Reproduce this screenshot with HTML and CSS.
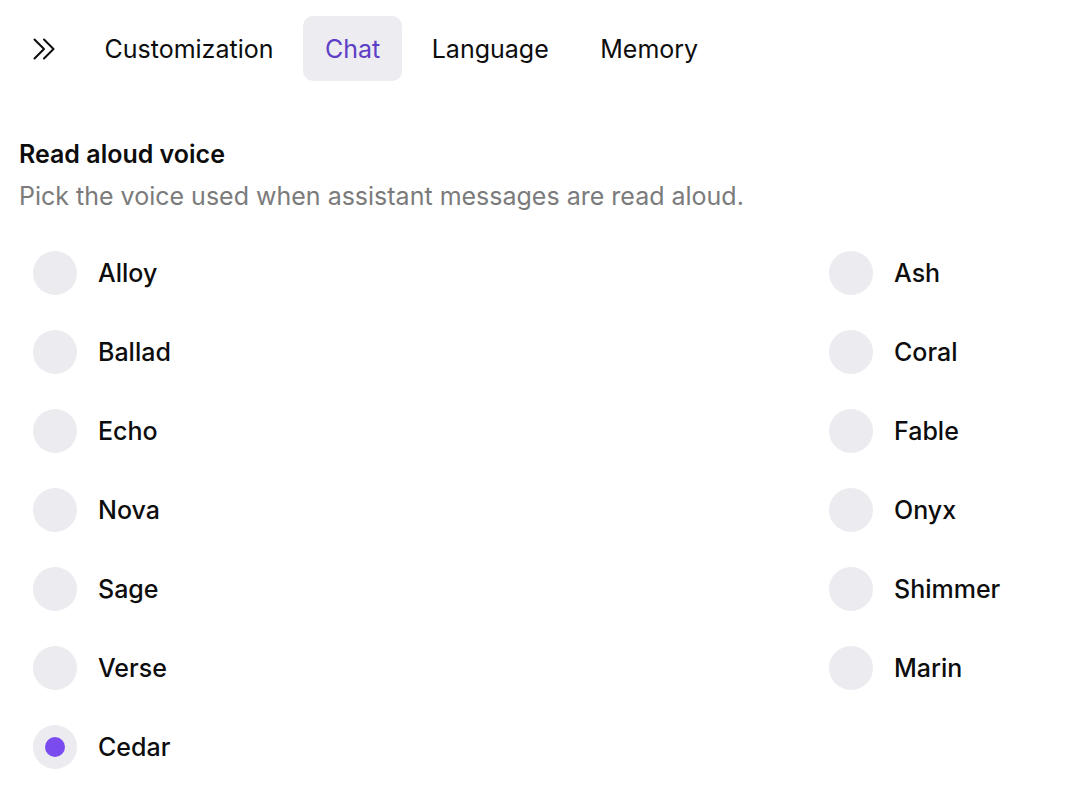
FILE: index.html
```html
<!DOCTYPE html>
<html>
<head>
 <title>Settings - Chat</title>
 <link rel="stylesheet" href="styles.css">
</head>
<body>
 <!-- settings panel -->
 <div class="settings-page">
  <!-- tab bar -->
  <div class="tab-bar">
   <button class="icon-button" aria-label="Expand">
    <svg width="22" height="22" viewBox="0 0 22 22" fill="none" stroke="#0d0d0d" stroke-width="2" stroke-linecap="round" stroke-linejoin="round">
     <path d="M1.5 1.5l9.5 9.5-9.5 9.5M11 1.5l9.5 9.5-9.5 9.5"/>
    </svg>
   </button>
   <button class="tab">Customization</button>
   <button class="tab active">Chat</button>
   <button class="tab">Language</button>
   <button class="tab">Memory</button>
  </div>

  <!-- voice section -->
  <div class="voice-section">
   <h3 class="section-title">Read aloud voice</h3>
   <p class="section-desc">Pick the voice used when assistant messages are read aloud.</p>

   <div class="voice-grid">
    <label class="voice-option"><span class="radio"></span>Alloy</label>
    <label class="voice-option"><span class="radio"></span>Ash</label>
    <label class="voice-option"><span class="radio"></span>Ballad</label>
    <label class="voice-option"><span class="radio"></span>Coral</label>
    <label class="voice-option"><span class="radio"></span>Echo</label>
    <label class="voice-option"><span class="radio"></span>Fable</label>
    <label class="voice-option"><span class="radio"></span>Nova</label>
    <label class="voice-option"><span class="radio"></span>Onyx</label>
    <label class="voice-option"><span class="radio"></span>Sage</label>
    <label class="voice-option"><span class="radio"></span>Shimmer</label>
    <label class="voice-option"><span class="radio"></span>Verse</label>
    <label class="voice-option"><span class="radio"></span>Marin</label>
    <label class="voice-option"><span class="radio checked"></span>Cedar</label>
   </div>
  </div>
 </div>
</body>
</html>
```

FILE: styles.css
```css
/* page basics */
body {
 margin: 0;
 background: #ffffff;
 font-family: Inter, "Noto Sans", sans-serif;
 color: #0d0d0d;
}

.settings-page {
 padding: 16px 19px;
}

/* tab bar */
.tab-bar {
 display: flex;
 align-items: center;
 gap: 7.5px;
}

.icon-button {
 display: flex;
 align-items: center;
 height: 65px;
 padding: 0 20px 0 14px;
 border: none;
 background: none;
 cursor: pointer;
}

.tab {
 height: 65px;
 padding: 0 22px;
 border: none;
 border-radius: 10px;
 background: none;
 font-family: inherit;
 font-size: 25px;
 color: #0d0d0d;
 cursor: pointer;
}

.tab.active {
 background: #ececf1;
 color: #5d3ec6;
}

/* voice section */
.section-title {
 margin: 57px 0 0;
 font-size: 25px;
 line-height: 32px;
 font-weight: 600;
}

.section-desc {
 margin: 10px 0 0;
 font-size: 25px;
 line-height: 32px;
 color: #7b7b7b;
}

.voice-grid {
 display: grid;
 grid-template-columns: 796px 1fr;
 row-gap: 35px;
 margin-top: 39px;
 padding-left: 14px;
}

.voice-option {
 display: flex;
 align-items: center;
 gap: 21px;
 font-size: 25px;
 font-weight: 500;
 cursor: pointer;
}

.radio {
 display: flex;
 align-items: center;
 justify-content: center;
 width: 44px;
 height: 44px;
 border-radius: 50%;
 background: #ebebf0;
}

.radio.checked::after {
 content: "";
 width: 20px;
 height: 20px;
 border-radius: 50%;
 background: #7a4cf0;
}
```
